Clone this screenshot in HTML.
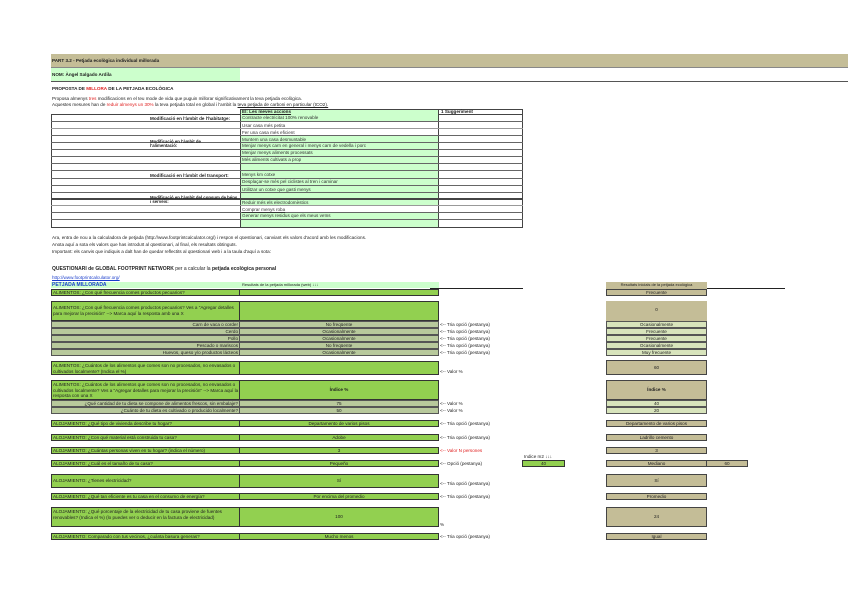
<!DOCTYPE html>
<html><head><meta charset="utf-8"><style>
*{margin:0;padding:0;box-sizing:border-box}
body{width:848px;height:599px;background:#fff;position:relative;overflow:hidden;font-family:"Liberation Sans",sans-serif;font-size:4.6px;color:#222}
div{position:absolute;white-space:nowrap;overflow:hidden}
.t{overflow:visible}
.b{font-weight:bold}
.g{background:#92d050;border:1px solid #333}
.sg{background:#b8c99c;border:1px solid #555;text-align:right;padding-right:1px}
.sgr{background:#b8c99c;border:1px solid #555;text-align:center}
.tan{background:#c4bd97;border:1px solid #444;text-align:center}
.lg{background:#d8e4bc;border:1px solid #555;text-align:center}
.q{padding-left:1px}
.v{text-align:center}
.r{color:#e02020}
.tr{border-bottom:1px solid #555;height:7px}
.n{color:#333}
</style></head><body>
<!-- header band -->
<div style="left:51px;top:54px;width:797px;height:14px;background:#c4bd97;border-bottom:1px solid #888"></div>
<div class="t b" style="left:52px;top:58px">PART 3.2 - Petjada ecològica individual millorada</div>
<div style="left:51px;top:68px;width:189px;height:13px;background:#ccffcc"></div>
<div style="left:51px;top:81px;width:797px;height:1px;background:#555"></div>
<div class="t b" style="left:52px;top:72px">NOM: Àngel Salgado Ardila</div>
<div class="t b" style="left:52px;top:86px">PROPOSTA DE <span class="r">MILLORA</span> DE LA PETJADA ECOLÒGICA</div>
<div class="t" style="left:52px;top:96px">Proposa almenys <span class="r">tres</span> modificacions en el teu mode de vida que puguin millorar significativament la teva petjada ecològica.</div>
<div class="t" style="left:52px;top:102px">Aquestes mesures han de <span class="r">reduir almenys un 30%</span> la teva petjada total en global i l'ambit la <u>teva petjada de carboni en particular (tCO2).</u></div>
<!-- table -->
<div style="left:51px;top:114px;width:472px;height:114px;border:1px solid #444"></div>
<div style="left:240px;top:109px;width:199px;height:118px;background:#ccffcc;border-left:1px solid #444;border-right:1px solid #444"></div>
<div style="left:240px;top:121px;width:199px;height:14px;background:#fff;border-left:1px solid #444;border-right:1px solid #444"></div>
<div style="left:240px;top:205px;width:199px;height:7px;background:#fff;border-left:1px solid #444;border-right:1px solid #444"></div>
<div style="left:240px;top:109px;width:283px;height:1px;background:#444"></div>
<div style="left:439px;top:109px;width:84px;height:118px;border-right:1px solid #444"></div>
<div class="t b" style="left:242px;top:109px"><u>El: Les meves accions</u></div>
<div class="t b" style="left:441px;top:109px">1 Suggeriment</div>
<div style="left:51px;top:121px;width:472px;height:1px;background:#666"></div>
<div style="left:51px;top:128px;width:472px;height:1px;background:#999"></div>
<div style="left:51px;top:135px;width:472px;height:1px;background:#666"></div>
<div style="left:51px;top:142px;width:472px;height:1px;background:#666"></div>
<div style="left:51px;top:149px;width:472px;height:1px;background:#666"></div>
<div style="left:51px;top:156px;width:472px;height:1px;background:#666"></div>
<div style="left:51px;top:163px;width:472px;height:1px;background:#666"></div>
<div style="left:51px;top:170px;width:472px;height:1px;background:#666"></div>
<div style="left:51px;top:178px;width:472px;height:1px;background:#666"></div>
<div style="left:51px;top:185px;width:472px;height:1px;background:#666"></div>
<div style="left:51px;top:192px;width:472px;height:1px;background:#666"></div>
<div style="left:51px;top:198px;width:472px;height:2px;background:#444"></div>
<div style="left:51px;top:205px;width:472px;height:1px;background:#999"></div>
<div style="left:51px;top:212px;width:472px;height:1px;background:#666"></div>
<div style="left:51px;top:219px;width:472px;height:1px;background:#666"></div>
<div class="t b" style="left:150px;top:116px">Modificació en l'àmbit de l'habitatge:</div>
<div class="t b" style="left:150px;top:140px;font-size:4.3px;line-height:4px">Modificació en l'àmbit de<br>l'alimentació:</div>
<div class="t b" style="left:150px;top:173px">Modificació en l'àmbit del transport:</div>
<div class="t b" style="left:150px;top:196px;font-size:4.3px;line-height:4px">Modificació en l'àmbit del consum de béns<br>i serveis:</div>
<div class="t n" style="left:242px;top:115px">Contracte electricitat 100% renovable</div>
<div class="t n" style="left:242px;top:123px">Usar casa més petita</div>
<div class="t n" style="left:242px;top:130px">Fer una casa més eficient</div>
<div class="t n" style="left:242px;top:137px">Muntem una casa desmuntable</div>
<div class="t n" style="left:242px;top:143px">Menjar menys carn en general i menys carn de vedella i porc</div>
<div class="t n" style="left:242px;top:150px">Menjar menys aliments processats</div>
<div class="t n" style="left:242px;top:157px">Més aliments cultivats a prop</div>
<div class="t n" style="left:242px;top:172px">Menys km cotxe</div>
<div class="t n" style="left:242px;top:179px">Desplaçar-se més pel ciclistes al tren i caminar</div>
<div class="t n" style="left:242px;top:187px">Utilitzar un cotxe que gasti menys</div>
<div class="t n" style="left:242px;top:200px">Reduir més els electrodomèstics</div>
<div class="t n" style="left:242px;top:207px"><u>Comprar menys roba</u></div>
<div class="t n" style="left:242px;top:213px">Generar menys residus que els meus veïns</div>
<!-- paragraph -->
<div class="t" style="left:52px;top:235px">Ara, entra de nou a la calculadora de petjada (http://www.footprintcalculator.org/) i respon el qüestionari, canviant els valors d'acord amb les modificacions.</div>
<div class="t" style="left:52px;top:242px">Anota aquí a sota els valors que has introduït al qüestionari, al final, els resultats obtinguts.</div>
<div class="t" style="left:52px;top:249px">Important: els canvis que indiquis a dalt han de quedar reflectits al qüestionari web i a la taula d'aquí a sota:</div>
<div class="t b" style="left:52px;top:266px;font-size:5px">QUESTIONARI de GLOBAL FOOTPRINT NETWORK <span style="font-weight:normal">per a calcular la </span>petjada ecològica personal</div>
<div class="t" style="left:52px;top:275px;color:#1a3dcc;text-decoration:underline">http://www.footprintcalculator.org/</div>
<div style="left:51px;top:282px;width:388px;height:6px;background:#ccffcc"></div>
<div class="t b" style="left:52px;top:282px;color:#1a3dcc;font-size:5px">PETJADA MILLORADA</div>
<div class="t" style="left:242px;top:282px;font-size:4px">Resultats de la petjada millorada (web) ↓↓↓</div>
<div style="left:430px;top:288px;width:93px;height:1px;background:#222"></div>
<div style="left:707px;top:288px;width:78px;height:1px;background:#222"></div>
<div class="tan" style="left:606px;top:282px;width:101px;height:7px;border:none;font-size:4px">Resultats inicials de la petjada ecològica</div>
<!-- left blocks -->
<div class="g q" style="left:51px;top:289px;width:189px;height:7px"><u>ALIMENTOS: ¿Con qué frecuencia comes productos pecuarios?</u></div>
<div class="g" style="left:239px;top:289px;width:200px;height:7px"></div>
<div class="tan" style="left:606px;top:289px;width:101px;height:7px"><u>Frecuente</u></div>

<div class="g q t" style="left:51px;top:301px;width:189px;height:20px;white-space:normal;line-height:5.5px;padding-top:3px">ALIMENTOS: ¿Con qué frecuencia comes productos pecuarios? Ves a "Agregar detalles para mejorar la precisión" --&gt; Marca aquí la resposta amb una X</div>
<div class="g" style="left:239px;top:301px;width:200px;height:20px"></div>
<div class="tan" style="left:606px;top:301px;width:101px;height:20px;line-height:18px;border:none">0</div>
<div class="sg" style="left:51px;top:321px;width:189px;height:7px">Carn de vaca o corder</div><div class="sgr" style="left:239px;top:321px;width:200px;height:7px">No freqüente</div><div class="t" style="left:440px;top:322px">&lt;-- Tria opció (pestanya)</div><div class="lg" style="left:606px;top:321px;width:101px;height:7px">Ocasionalmente</div>
<div class="sg" style="left:51px;top:328px;width:189px;height:7px">Cerdo</div><div class="sgr" style="left:239px;top:328px;width:200px;height:7px">Ocasionalmente</div><div class="t" style="left:440px;top:329px">&lt;-- Tria opció (pestanya)</div><div class="lg" style="left:606px;top:328px;width:101px;height:7px">Frecuente</div>
<div class="sg" style="left:51px;top:335px;width:189px;height:7px">Pollo</div><div class="sgr" style="left:239px;top:335px;width:200px;height:7px">Ocasionalmente</div><div class="t" style="left:440px;top:336px">&lt;-- Tria opció (pestanya)</div><div class="lg" style="left:606px;top:335px;width:101px;height:7px">Frecuente</div>
<div class="sg" style="left:51px;top:342px;width:189px;height:7px">Pescado o mariscos</div><div class="sgr" style="left:239px;top:342px;width:200px;height:7px">No freqüente</div><div class="t" style="left:440px;top:343px">&lt;-- Tria opció (pestanya)</div><div class="lg" style="left:606px;top:342px;width:101px;height:7px">Ocasionalmente</div>
<div class="sg" style="left:51px;top:349px;width:189px;height:7px">Huevos, queso y/o productos lácteos</div><div class="sgr" style="left:239px;top:349px;width:200px;height:7px">Ocasionalmente</div><div class="t" style="left:440px;top:350px">&lt;-- Tria opció (pestanya)</div><div class="lg" style="left:606px;top:349px;width:101px;height:7px">Muy frecuente</div>

<div class="g q t" style="left:51px;top:361px;width:189px;height:14px;white-space:normal;line-height:5.5px;padding-top:1px">ALIMENTOS: ¿Cuántos de los alimentos que comes son no procesados, no envasados o cultivados localmente? (Indica el %)</div>
<div class="g" style="left:239px;top:361px;width:200px;height:14px"></div>
<div class="t" style="left:440px;top:369px">&lt;-- Valor %</div>
<div class="tan" style="left:606px;top:360px;width:101px;height:15px;line-height:13px">60</div>

<div class="g q t" style="left:51px;top:380px;width:189px;height:20px;white-space:normal;line-height:5.5px;padding-top:1px">ALIMENTOS: ¿Cuántos de los alimentos que comes son no procesados, no envasados o cultivados localmente? Ves a "Agregar detalles para mejorar la precisión" --&gt; Marca aquí la resposta con una X</div>
<div class="g v b" style="left:239px;top:380px;width:200px;height:20px;line-height:18px">Índice %</div>
<div class="tan b" style="left:606px;top:380px;width:101px;height:20px;line-height:18px">Índice %</div>
<div class="sg" style="left:51px;top:400px;width:189px;height:7px">¿Qué cantidad de tu dieta se compone de alimentos frescos, sin embalaje?</div><div class="sgr" style="left:239px;top:400px;width:200px;height:7px">75</div><div class="t" style="left:440px;top:401px">&lt;-- Valor %</div><div class="lg" style="left:606px;top:400px;width:101px;height:7px">40</div>
<div class="sg" style="left:51px;top:407px;width:189px;height:7px">¿Cuánto de tu dieta es cultivado o producido localmente?</div><div class="sgr" style="left:239px;top:407px;width:200px;height:7px">50</div><div class="t" style="left:440px;top:408px">&lt;-- Valor %</div><div class="lg" style="left:606px;top:407px;width:101px;height:7px">20</div>

<div class="g q" style="left:51px;top:420px;width:189px;height:7px">ALOJAMIENTO: ¿Qué tipo de vivienda describe tu hogar?</div><div class="g v" style="left:239px;top:420px;width:200px;height:7px">Departamento de varios pisos</div><div class="t" style="left:440px;top:421px">&lt;-- Tria opció (pestanya)</div><div class="tan" style="left:606px;top:420px;width:101px;height:7px">Departamento de varios pisos</div>
<div class="g q" style="left:51px;top:434px;width:189px;height:7px">ALOJAMIENTO: ¿Con qué material está construida tu casa?</div><div class="g v" style="left:239px;top:434px;width:200px;height:7px">Adobe</div><div class="t" style="left:440px;top:435px">&lt;-- Tria opció (pestanya)</div><div class="tan" style="left:606px;top:434px;width:101px;height:7px">Ladrillo cemento</div>
<div class="g q" style="left:51px;top:447px;width:189px;height:7px">ALOJAMIENTO: ¿Cuántas personas viven en tu hogar? (indica el número)</div><div class="g v" style="left:239px;top:447px;width:200px;height:7px">3</div><div class="t r" style="left:440px;top:448px">&lt;-- Valor N persones</div><div class="tan" style="left:606px;top:447px;width:101px;height:7px">3</div>
<div class="t" style="left:524px;top:454px">Indice m2 ↓↓↓</div>
<div class="g q" style="left:51px;top:460px;width:189px;height:7px">ALOJAMIENTO: ¿Cuál es el tamaño de tu casa?</div><div class="g v" style="left:239px;top:460px;width:200px;height:7px">Pequeño</div><div class="t" style="left:440px;top:461px">&lt;-- Opció (pestanya)</div>
<div class="g v" style="left:522px;top:460px;width:43px;height:7px">40</div>
<div class="tan" style="left:606px;top:460px;width:101px;height:7px">Mediano</div><div class="tan" style="left:706px;top:460px;width:42px;height:7px">60</div>
<div class="g q" style="left:51px;top:474px;width:189px;height:14px;line-height:12px">ALOJAMIENTO: ¿Tienes electricidad?</div><div class="g v" style="left:239px;top:474px;width:200px;height:14px;line-height:12px">Sí</div><div class="t" style="left:440px;top:481px">&lt;-- Tria opció (pestanya)</div><div class="tan" style="left:606px;top:474px;width:101px;height:13px;line-height:11px">Sí</div>
<div class="g q" style="left:51px;top:493px;width:189px;height:7px">ALOJAMIENTO: ¿Qué tan eficiente es tu casa en el consumo de energía?</div><div class="g v" style="left:239px;top:493px;width:200px;height:7px">Por encima del promedio</div><div class="t" style="left:440px;top:494px">&lt;-- Tria opció (pestanya)</div><div class="tan" style="left:606px;top:493px;width:101px;height:7px">Promedio</div>
<div class="g q t" style="left:51px;top:507px;width:189px;height:20px;white-space:normal;line-height:5.5px;padding-top:1px">ALOJAMIENTO: ¿Qué porcentaje de la electricidad de tu casa proviene de fuentes renovables? (Indica el %) (lo puedes ver o deducir en la factura de electricidad)</div><div class="g v" style="left:239px;top:507px;width:200px;height:20px;line-height:18px">100</div><div class="t" style="left:440px;top:522px">%</div><div class="tan" style="left:606px;top:507px;width:101px;height:20px;line-height:18px">24</div>
<div class="g q" style="left:51px;top:533px;width:189px;height:7px">ALOJAMIENTO: Comparado con tus vecinos, ¿cuánta basura generas?</div><div class="g v" style="left:239px;top:533px;width:200px;height:7px">Mucho menos</div><div class="t" style="left:440px;top:534px">&lt;-- Tria opció (pestanya)</div><div class="tan" style="left:606px;top:533px;width:101px;height:7px">Igual</div>
</body></html>
